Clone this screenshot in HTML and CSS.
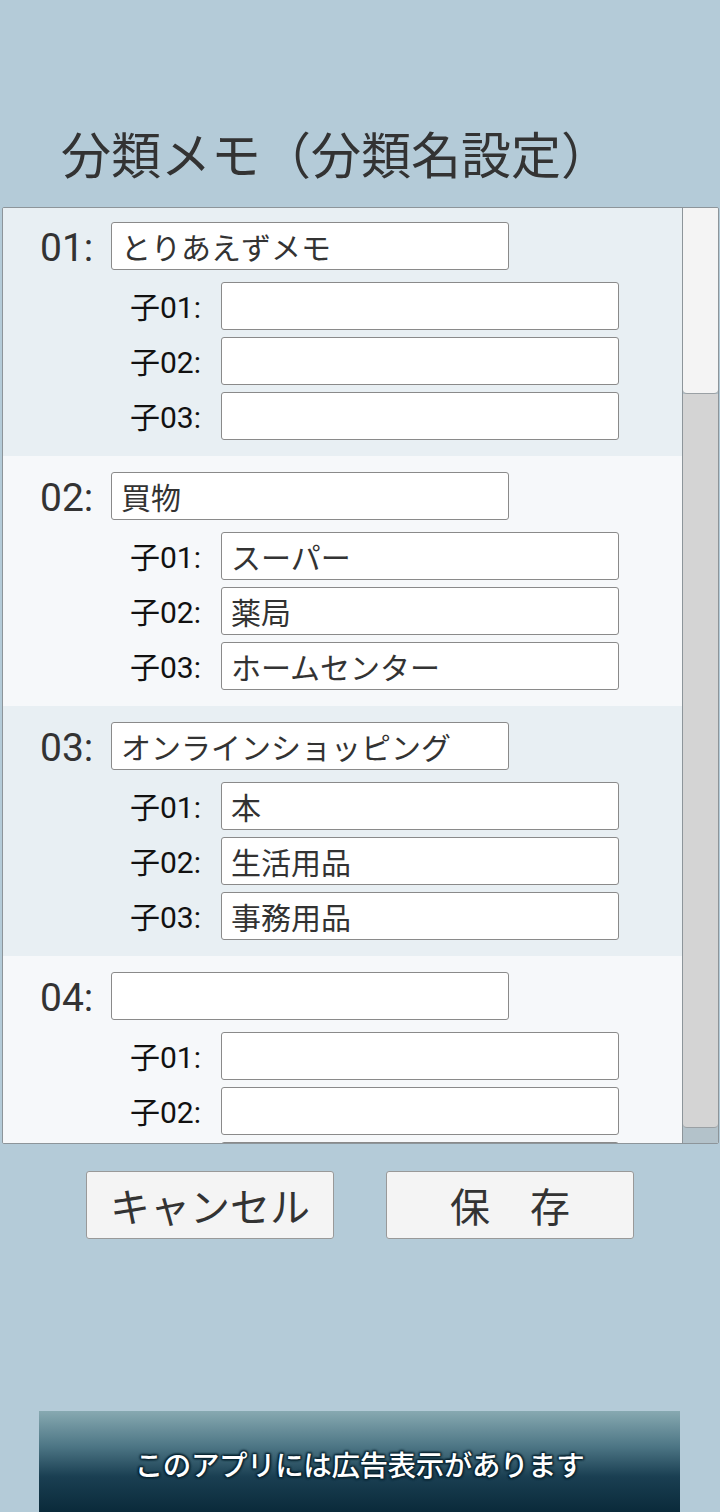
FILE: index.html
```html
<!DOCTYPE html>
<html lang="ja">
<head>
<meta charset="utf-8">
<title>分類メモ（分類名設定）</title>
<link rel="stylesheet" href="styles.css">
</head>
<body>
<div class="page">
  <h1 class="title">分類メモ（分類名設定）</h1>

  <div class="panel">
    <div class="list">
      <div class="group odd">
        <div class="main-row"><span class="main-label">01:</span><input class="field main-field" type="text" value="とりあえずメモ"></div>
        <div class="sub-row"><span class="sub-label">子01:</span><input class="field sub-field" type="text" value=""></div>
        <div class="sub-row"><span class="sub-label">子02:</span><input class="field sub-field" type="text" value=""></div>
        <div class="sub-row"><span class="sub-label">子03:</span><input class="field sub-field" type="text" value=""></div>
      </div>
      <div class="group even">
        <div class="main-row"><span class="main-label">02:</span><input class="field main-field" type="text" value="買物"></div>
        <div class="sub-row"><span class="sub-label">子01:</span><input class="field sub-field" type="text" value="スーパー"></div>
        <div class="sub-row"><span class="sub-label">子02:</span><input class="field sub-field" type="text" value="薬局"></div>
        <div class="sub-row"><span class="sub-label">子03:</span><input class="field sub-field" type="text" value="ホームセンター"></div>
      </div>
      <div class="group odd">
        <div class="main-row"><span class="main-label">03:</span><input class="field main-field" type="text" value="オンラインショッピング"></div>
        <div class="sub-row"><span class="sub-label">子01:</span><input class="field sub-field" type="text" value="本"></div>
        <div class="sub-row"><span class="sub-label">子02:</span><input class="field sub-field" type="text" value="生活用品"></div>
        <div class="sub-row"><span class="sub-label">子03:</span><input class="field sub-field" type="text" value="事務用品"></div>
      </div>
      <div class="group even">
        <div class="main-row"><span class="main-label">04:</span><input class="field main-field" type="text" value=""></div>
        <div class="sub-row"><span class="sub-label">子01:</span><input class="field sub-field" type="text" value=""></div>
        <div class="sub-row"><span class="sub-label">子02:</span><input class="field sub-field" type="text" value=""></div>
        <div class="sub-row"><span class="sub-label">子03:</span><input class="field sub-field" type="text" value=""></div>
      </div>
    </div>
    <div class="scrollbar">
      <div class="track-top"></div>
      <div class="thumb"></div>
    </div>
  </div>

  <div class="buttons">
    <button class="btn" type="button">キャンセル</button>
    <button class="btn" type="button">保　存</button>
  </div>

  <div class="ad">
    <span class="ad-text">このアプリには広告表示があります</span>
  </div>
</div>
</body>
</html>
```

FILE: styles.css
```css
html, body {
  margin: 0;
  padding: 0;
}

body {
  background: #b4cbd8;
  font-family: "Noto Sans CJK JP", "Noto Sans", sans-serif;
  color: #333;
}

.page {
  width: 720px;
  height: 1512px;
  overflow: hidden;
  display: flex;
  flex-direction: column;
}

.page > * {
  flex-shrink: 0;
}

.title {
  margin: 0;
  padding: 122px 0 0 61px;
  height: 85px;
  box-sizing: content-box;
  font-size: 50px;
  line-height: 60px;
  font-weight: 400;
  color: #333;
  letter-spacing: 0;
  white-space: nowrap;
}

.panel {
  margin-left: 2px;
  width: 715px;
  height: 935px;
  border: 1px solid #8d959a;
  border-radius: 2px;
  display: flex;
  background: #f6f8fa;
  overflow: hidden;
}

.list {
  flex: 1;
  overflow: hidden;
}

.group {
  height: 250px;
  box-sizing: border-box;
  padding-top: 16px;
  display: flex;
  flex-direction: column;
}

.group:first-child {
  margin-top: -2px;
}

.group.odd {
  background: #e8eff3;
}

.group.even {
  background: #f6f8fa;
}

.main-row {
  display: flex;
  align-items: center;
  height: 48px;
  margin-bottom: 12px;
}

.main-label {
  margin-left: 37px;
  width: 71px;
  font-family: "Roboto", "Noto Sans CJK JP", sans-serif;
  font-size: 39px;
  color: #333;
  line-height: 48px;
  padding-top: 4px;
}

.sub-row {
  display: flex;
  align-items: center;
  height: 48px;
  margin-bottom: 7px;
}

.sub-label {
  width: 198px;
  text-align: right;
  margin-right: 20px;
  font-family: "Roboto", "Noto Sans CJK JP", sans-serif;
  font-size: 30px;
  color: #111;
  line-height: 48px;
  padding-top: 3px;
}

.field {
  box-sizing: border-box;
  height: 48px;
  width: 398px;
  margin: 0;
  border: 1px solid #8a8a8a;
  border-radius: 3px;
  background: #fff;
  padding: 0 9px;
  font-family: "Noto Sans CJK JP", "Noto Sans", sans-serif;
  font-size: 30px;
  color: #333;
  outline: none;
}

.scrollbar {
  width: 35px;
  border-left: 1px solid #8d959a;
  background: #b3c2ca;
  display: flex;
  flex-direction: column;
}

.track-top {
  height: 186px;
  background: #f4f4f4;
  border-bottom: 1px solid #9aa0a4;
  border-radius: 0 0 4px 4px;
  box-sizing: border-box;
}

.thumb {
  height: 734px;
  background: #d4d4d4;
  border-bottom: 1px solid #9aa0a4;
  border-radius: 0 0 4px 4px;
  box-sizing: border-box;
}

.buttons {
  display: flex;
  justify-content: center;
  gap: 52px;
  margin-top: 27px;
}

.btn {
  width: 248px;
  height: 68px;
  margin: 0;
  padding: 0;
  background: #f4f4f4;
  border: 1px solid #999;
  border-radius: 3px;
  font-family: "Noto Sans CJK JP", "Noto Sans", sans-serif;
  font-size: 40px;
  color: #333;
  line-height: 56px;
}

.ad {
  margin: 172px 0 0 39px;
  width: 641px;
  height: 101px;
  background: linear-gradient(to bottom, #87a9b1 0%, #4d7685 35%, #1a3f52 65%, #0a2a3a 100%);
  display: flex;
  justify-content: center;
  padding-top: 33px;
  box-sizing: border-box;
}

.ad-text {
  font-family: "Noto Sans CJK JP", sans-serif;
  font-size: 28.5px;
  line-height: 40px;
  font-weight: 500;
  color: #fff;
  letter-spacing: -0.4px;
  text-shadow:
    0 0 2px #0b2633,
    0 0 3px #0b2633,
    1px 1px 2px #0b2633,
    -1px -1px 2px #0b2633,
    1px -1px 2px #0b2633,
    -1px 1px 2px #0b2633;
}
```
